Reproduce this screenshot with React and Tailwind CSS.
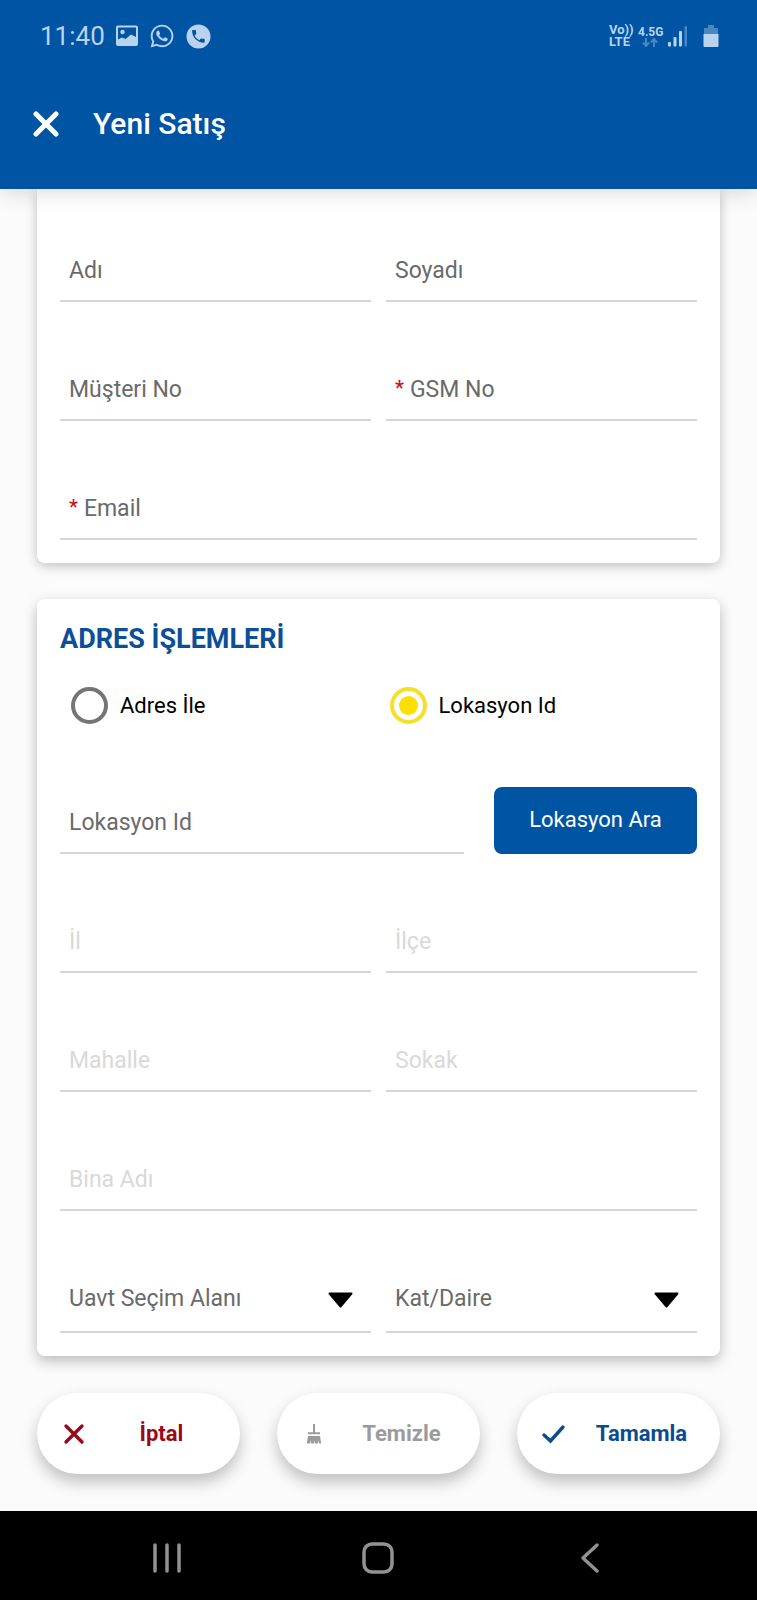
import { useState } from 'react';
import { FaWhatsapp } from 'react-icons/fa';

const PHONE_PATH =
  'M6.62 10.79c1.44 2.83 3.76 5.14 6.59 6.59l2.2-2.2c.27-.27.67-.36 1.02-.24 1.12.37 2.33.57 3.57.57.55 0 1 .45 1 1V20c0 .55-.45 1-1 1-9.39 0-17-7.61-17-17 0-.55.45-1 1-1h3.5c.55 0 1 .45 1 1 0 1.25.2 2.45.57 3.57.11.35.03.74-.25 1.02l-2.2 2.2z';

const StatusBar = () => (
  <div className="flex h-[72px] items-center justify-between pr-[38px] pl-10 text-[#b9d3ef]">
    <div className="flex items-center gap-[11px]">
      <span className="text-[26px] leading-8">11:40</span>
      <svg className="h-[22px] w-[22px]" viewBox="0 0 22 22" fill="none">
        <rect x="1" y="1.5" width="20" height="18.5" rx="1" stroke="currentColor" strokeWidth="2" />
        <circle cx="6.5" cy="7" r="2.2" fill="currentColor" />
        <path d="M2 14.5 6 12.500l3.500 1.500 5.500-4.500 6 3v7.500H2z" fill="currentColor" />
      </svg>
      <FaWhatsapp className="h-[26px] w-[26px]" />
      <svg className="h-[25px] w-[25px]" viewBox="0 0 25 25">
        <circle cx="12.5" cy="12.5" r="12" fill="currentColor" />
        <path d={PHONE_PATH} fill="#0054a4" transform="translate(4 4) scale(.7)" />
      </svg>
    </div>

    <div className="flex items-center">
      <span className="w-[29px] text-[13px] leading-[12px] font-bold">
        Vo))
        <br />
        LTE
      </span>
      <div className="flex w-[30px] flex-col">
        <span className="text-[12px] leading-[12px] font-bold">4.5G</span>
        <svg className="ml-1 h-[9px] w-4 opacity-40" viewBox="0 0 16 9" fill="none" stroke="currentColor" strokeWidth="2">
          <path d="M4 0v8M1 4.5l3 3.5 3-3.5M12 9V1M9 4.5 12 1l3 3.5" />
        </svg>
      </div>
      <svg className="h-[22px] w-5" viewBox="0 0 20 22" fill="currentColor">
        <rect x="0" y="17" width="3" height="4.5" rx="1" />
        <rect x="5.5" y="12" width="3" height="9.5" rx="1" />
        <rect x="11" y="6" width="3" height="15.5" rx="1" />
        <rect x="16.5" y="1" width="2.5" height="20.5" rx="1" opacity=".4" />
      </svg>
      <svg className="ml-[15px] h-6 w-4" viewBox="0 0 16 24" fill="currentColor">
        <path d="M5 1h6v3h4v6H1V4h4z" opacity=".4" />
        <path d="M.5 10h15v12a1 1 0 0 1-1 1h-13a1 1 0 0 1-1-1z" />
      </svg>
    </div>
  </div>
);

const Header = () => (
  <header className="relative z-10 h-[189px] bg-[#0054a4] shadow-[0_2px_22px_rgba(0,0,0,0.16)]">
    <StatusBar />
    <div className="flex h-[104px] items-center gap-[34px] pl-[33px] text-white">
      <button type="button" aria-label="Kapat">
        <svg className="h-[26px] w-[26px]" viewBox="0 0 26 26" fill="none" stroke="currentColor" strokeWidth="5" strokeLinecap="round">
          <path d="M3 3l20 20M23 3 3 23" />
        </svg>
      </button>
      <h1 className="text-[30px] leading-9 font-medium">Yeni Satış</h1>
    </div>
  </header>
);

const Field = ({ label, required, disabled, className = '' }) => (
  <label
    className={`flex h-[68px] items-center gap-2 border-b-2 border-[#d6d6d6] px-[9px] pt-2 text-[23px] leading-8 ${
      disabled ? 'text-[#d9d9d9]' : 'text-[#6a6a6a]'
    } ${className}`}
  >
    <span className="flex shrink-0 gap-1.5">
      {required && <span className="text-[20px] leading-7 font-medium text-[#c8141c]">*</span>}
      {label}
    </span>
    <input type="text" disabled={disabled} className="w-full min-w-0 flex-1 bg-transparent outline-none" />
  </label>
);

const Select = ({ label }) => (
  <div className="relative border-b-2 border-[#d6d6d6]">
    <select
      aria-label={label}
      className="h-[69px] w-full appearance-none bg-transparent pt-1 pr-12 pl-[9px] text-[23px] leading-8 text-[#6a6a6a] outline-none"
    >
      <option>{label}</option>
    </select>
    <svg className="pointer-events-none absolute top-[30px] right-[18px] h-4 w-[25px]" viewBox="0 0 25 16">
      <path d="M1.5 1.5h22L12.5 14.5z" strokeWidth="2" stroke="#000" strokeLinejoin="round" />
    </svg>
  </div>
);

const Radio = ({ label, value, selected, onSelect }) => (
  <label className="flex items-center gap-3 pl-[11px] text-[22px] leading-8 text-black">
    <input
      type="radio"
      name="adres-tipi"
      value={value}
      checked={selected === value}
      onChange={() => onSelect(value)}
      className="h-[37px] w-[37px] appearance-none rounded-full border-4 border-[#757575] bg-clip-content p-[5px] checked:border-[#f3e02b] checked:bg-[#ffdf00]"
    />
    {label}
  </label>
);

const actions = [
  {
    label: 'İptal',
    color: 'text-[#990a18]',
    icon: <path d="M5 5l16 16M21 5 5 21" strokeWidth="3.4" strokeLinecap="round" />,
  },
  {
    label: 'Temizle',
    color: 'text-[#9b9b9b]',
    icon: (
      <>
        <path d="M13 3v9M7 12.2h12" strokeWidth="2" />
        <path d="M7 15h12l1.2 7.5H18l-.5-3.5-.6 3.5h-3l-.4-3.5-.6 3.5H10L9.6 19 9 22.5H5.8z" fill="currentColor" stroke="none" />
      </>
    ),
  },
  {
    label: 'Tamamla',
    color: 'text-[#0c4b8e]',
    icon: <path d="M3 14l6.500 6L22 6" strokeWidth="3.4" strokeLinecap="round" />,
  },
];

const ActionButton = ({ label, color, icon }) => (
  <button
    type="button"
    className={`flex h-[81px] items-center rounded-full bg-white pr-1 pl-6 text-[22px] leading-8 font-bold shadow-[0_8px_16px_rgba(0,0,0,0.24)] ${color}`}
  >
    <svg className="h-[26px] w-[26px]" viewBox="0 0 26 26" fill="none" stroke="currentColor">
      {icon}
    </svg>
    <span className="flex-1 text-center">{label}</span>
  </button>
);

const NavBar = () => (
  <nav className="grid h-[89px] grid-cols-3 place-items-center bg-black px-[61px] pt-1 text-[#929292]">
    <button type="button" aria-label="Son uygulamalar">
      <svg className="h-8 w-8" viewBox="0 0 32 32" fill="none" stroke="currentColor" strokeWidth="3.5" strokeLinecap="round">
        <path d="M4 3v26M16 3v26M28 3v26" />
      </svg>
    </button>
    <button type="button" aria-label="Ana ekran">
      <svg className="h-8 w-8" viewBox="0 0 32 32" fill="none" stroke="currentColor" strokeWidth="3.5">
        <rect x="2" y="2" width="28" height="28" rx="8" />
      </svg>
    </button>
    <button type="button" aria-label="Geri">
      <svg className="h-8 w-8" viewBox="0 0 32 32" fill="none" stroke="currentColor" strokeWidth="3.5" strokeLinecap="round" strokeLinejoin="round">
        <path d="M23 3 9 16l14 13" />
      </svg>
    </button>
  </nav>
);

const App = () => {
  const [addressType, setAddressType] = useState('lokasyon');

  return (
    <div className="min-h-screen bg-[#fbfbfb] font-['Roboto',sans-serif]">
      <Header />

      <main className="px-[37px]">
        <section className="grid grid-cols-2 gap-x-[15px] gap-y-[51px] rounded-b-lg bg-white px-[23px] pt-[45px] pb-[23px] shadow-[0_3px_12px_rgba(0,0,0,0.24)]">
          <Field label="Adı" />
          <Field label="Soyadı" />
          <Field label="Müşteri No" />
          <Field label="GSM No" required />
          <Field label="Email" required className="col-span-2" />
        </section>

        <section className="mt-9 rounded-lg bg-white px-[23px] pt-[22px] pb-[23px] shadow-[0_5px_14px_rgba(0,0,0,0.26)]">
          <h2 className="text-[27px] leading-9 font-bold text-[#0c4f97]">ADRES İŞLEMLERİ</h2>

          <div className="mt-[30px] grid grid-cols-2">
            <Radio label="Adres İle" value="adres" selected={addressType} onSelect={setAddressType} />
            <Radio label="Lokasyon Id" value="lokasyon" selected={addressType} onSelect={setAddressType} />
          </div>

          <div className="mt-[62px] flex items-center gap-[30px]">
            <Field label="Lokasyon Id" className="flex-1" />
            <button type="button" className="h-[67px] w-[203px] rounded-lg bg-[#0054a4] text-[22px] leading-8 text-white">
              Lokasyon Ara
            </button>
          </div>

          <div className="mt-[51px] grid grid-cols-2 gap-x-[15px] gap-y-[51px]">
            <Field label="İl" disabled />
            <Field label="İlçe" disabled />
            <Field label="Mahalle" disabled />
            <Field label="Sokak" disabled />
            <Field label="Bina Adı" disabled className="col-span-2" />
            <Select label="Uavt Seçim Alanı" />
            <Select label="Kat/Daire" />
          </div>
        </section>

        <div className="grid grid-cols-3 gap-[37px] py-[37px]">
          {actions.map((action) => (
            <ActionButton key={action.label} {...action} />
          ))}
        </div>
      </main>

      <NavBar />
    </div>
  );
};

export default App;
